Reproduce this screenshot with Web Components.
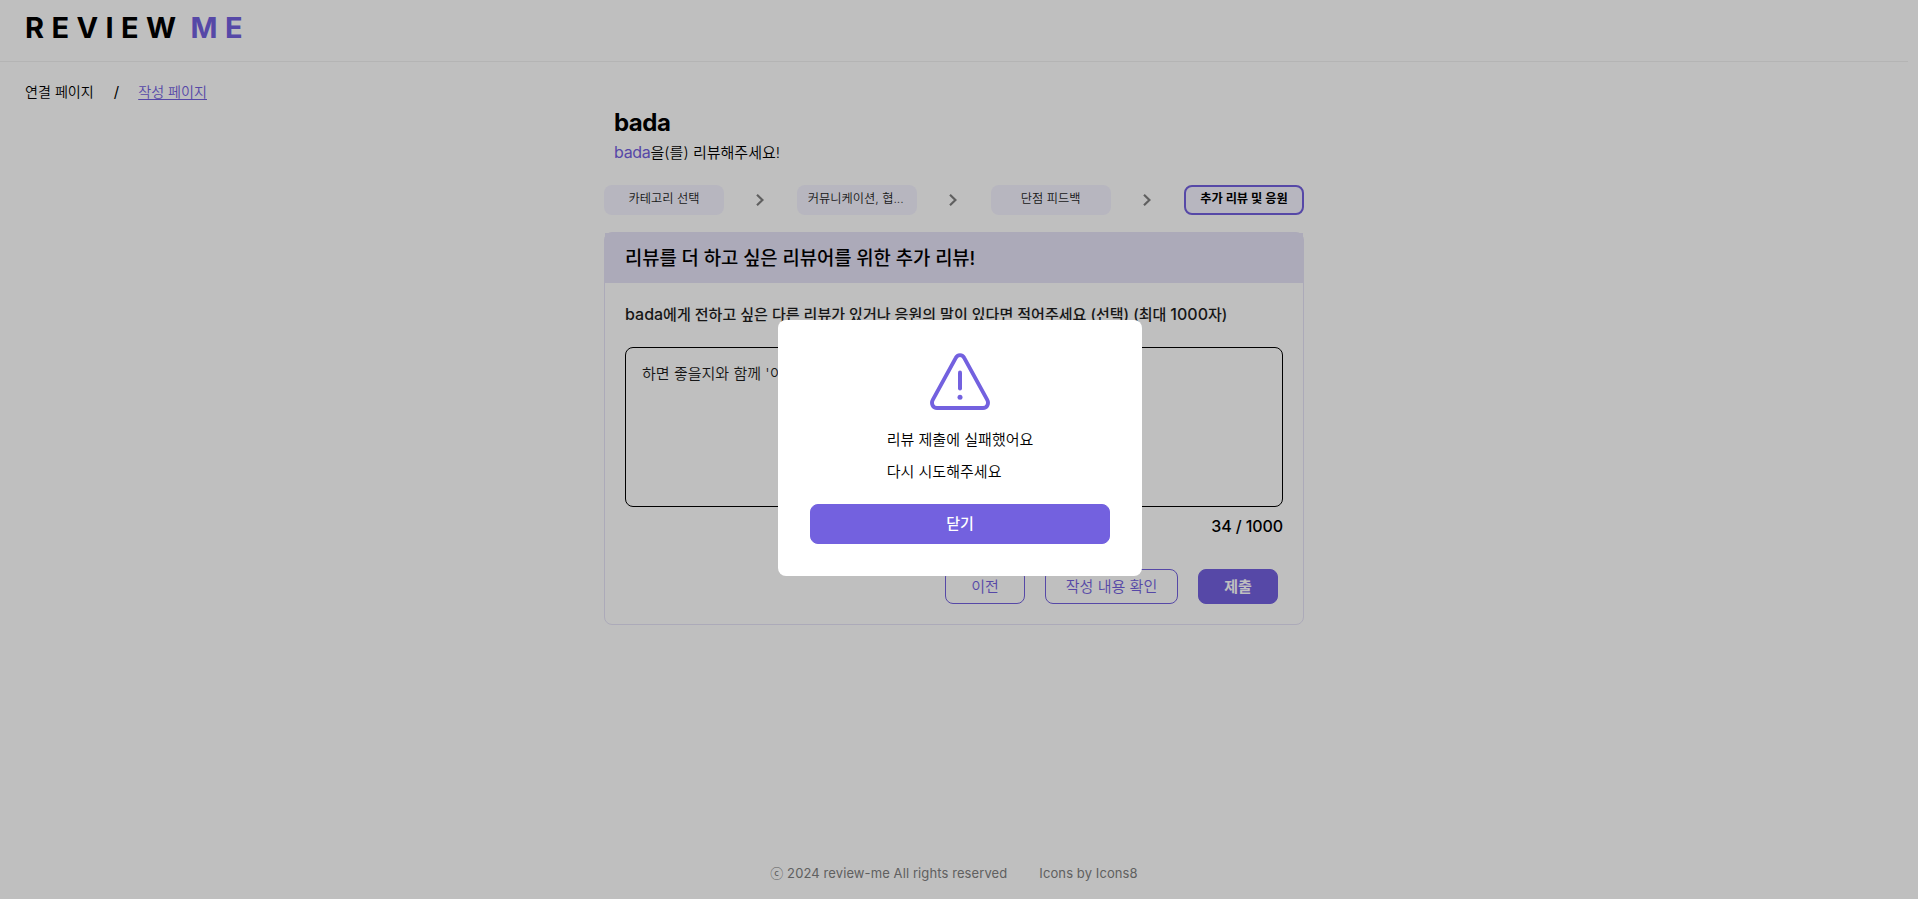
<!DOCTYPE html>
<html lang="ko">
<head>
<meta charset="utf-8">
<title>REVIEW ME</title>
<style>
html,body{margin:0;height:100%;overflow:hidden;background:#fff}
body{font-family:Inter,"Noto Sans CJK KR",sans-serif;font-size:16px;color:#000}
</style>
</head>
<body>
<review-app></review-app>
<script>
const define = (name, css, html) => customElements.define(name, class extends HTMLElement {
  constructor() {
    super();
    const t = document.createElement('template');
    t.innerHTML = `<style>*{box-sizing:border-box}${css}</style>${html}`;
    this.attachShadow({mode: 'open'}).append(t.content.cloneNode(true));
  }
});

/* Hangul run, set slightly smaller than the Latin around it */
define('ko-text', ':host{font-size:.94em;font-weight:var(--ko-weight,350)}', '<slot></slot>');

define('top-bar', `
:host{display:block;height:62px;border-bottom:1px solid #f0f0f0;padding-left:25px;box-sizing:border-box}
div{display:flex;gap:7px;font:700 29px/56px Inter,sans-serif;letter-spacing:7.4px;white-space:nowrap}
b{color:#7361df;font-weight:700}`,
`<div><span>REVIEW</span><b>ME</b></div>`);

define('bread-crumb', `
:host{display:flex;gap:20px;padding:18px 0 0 25px;font-size:15px;line-height:24px;height:43px;box-sizing:border-box}
a{color:#7361df;text-decoration:underline;text-underline-offset:2px;text-decoration-thickness:1px;margin-left:-1px;line-height:23px}
ko-text{line-height:24px}`,
`<ko-text>연결 페이지</ko-text><span>/</span><a><ko-text>작성 페이지</ko-text></a>`);

define('review-title', `
:host{display:block;padding-left:10px;height:80px}
h1{margin:0;font-size:24px;line-height:36px;font-weight:700;letter-spacing:-.5px}
p{margin:0;line-height:23px}
b{font-weight:400;color:#7361df;letter-spacing:-.3px}`,
`<h1>bada</h1><p><b>bada</b><ko-text>을(를) 리뷰해주세요!</ko-text></p>`);

define('step-item', `
:host{display:block;width:120px;height:30px;border-radius:8px;background:#f5f3ff;font-size:13px;line-height:27px;text-align:center;box-sizing:border-box;color:#1e1e1e}
:host([clipped]){padding-right:3px}
:host([current]){border:2px solid #7361df;line-height:23px;--ko-weight:700;color:#000}`,
`<ko-text><slot></slot></ko-text>`);

define('step-arrow', `:host{display:flex;width:8px;height:30px;align-items:center}svg{display:block;margin-left:-.5px}`,
`<svg width="8" height="12" viewBox="0 0 8 12" fill="none" stroke="#808080" stroke-width="2.2"><path d="M1 .8 6.4 6 1 11.2"/></svg>`);

define('step-bar', `:host{display:flex;justify-content:space-between}`,
`<step-item>카테고리 선택</step-item><step-arrow></step-arrow><step-item clipped>커뮤니케이션, 협...</step-item><step-arrow></step-arrow><step-item>단점 피드백</step-item><step-arrow></step-arrow><step-item current>추가 리뷰 및 응원</step-item>`);

define('ui-button', `
:host{display:flex;justify-content:center;width:80px;height:35px;border:1px solid #7361df;border-radius:8px;color:#7361df;line-height:33px;box-sizing:border-box}
:host([wide]){width:133px}
:host([primary]){background:#7361df;color:#fff;--ko-weight:700}
:host([full]){width:300px;height:40px;line-height:38px;--ko-weight:500}`,
`<ko-text><slot></slot></ko-text>`);

define('review-card', `
:host{display:block;margin-top:17px;height:393px;border:1px solid #e6e3f7;border-radius:8px;box-sizing:border-box}
header{height:50px;background:#e6e3f7;padding-left:20px;font-size:20px;line-height:51px;--ko-weight:500;letter-spacing:-.06px}
section{padding:18px 20px 0;display:flex;flex-direction:column}
.q{height:26px;line-height:26px;font-weight:500;--ko-weight:500;color:#1e1e1e;white-space:nowrap}
.area{margin-top:20px;height:160px;border:1px solid #000;border-radius:8px;padding:12px 16px;line-height:26px;color:#1e1e1e;white-space:nowrap;overflow:hidden}
.count{margin-top:7px;text-align:right;line-height:24px;font-weight:500;letter-spacing:-.1px}
nav{display:flex;justify-content:flex-end;gap:20px;padding-right:5px;margin-top:31px}`,
`<header><ko-text>리뷰를 더 하고 싶은 리뷰어를 위한 추가 리뷰!</ko-text></header>
<section><div class="q">bada<ko-text>에게 전하고 싶은 다른 리뷰가 있거나 응원의 말이 있다면 적어주세요 (선택) (최대 </ko-text>1000<ko-text>자)</ko-text></div>
<div class="area"><ko-text>하면 좋을지와 함께 '이</ko-text></div>
<div class="count">34 / 1000</div>
<nav><ui-button>이전</ui-button><ui-button wide>작성 내용 확인</ui-button><ui-button primary>제출</ui-button></nav></section>`);

define('page-footer', `
:host{display:flex;gap:32px;justify-content:center;font-size:13px;line-height:24px;color:#808080;white-space:nowrap;letter-spacing:.1px}`,
`<span>ⓒ 2024 review-me All rights reserved</span><span>Icons by Icons8</span>`);

define('error-modal', `
:host{position:absolute;inset:0;background:rgba(0,0,0,.25);display:flex;align-items:center;justify-content:center;padding:0 0 3px 2px;box-sizing:border-box}
.box{width:364px;height:256px;border-radius:8px;background:#fff;display:flex;flex-direction:column;align-items:center;padding:32px}
svg{display:block;margin-bottom:12px}
p{margin:0;line-height:32px;height:80px}
p ko-text{display:block}
`,
`<div class="box"><svg width="60" height="60" viewBox="0 0 60 60" fill="none" stroke="#7361df" stroke-linecap="round" stroke-linejoin="round"><path d="M25.8 5.900 2.900 47.600C.7 51.500 3 56 7 56H53C57 56 59.300 51.500 57.100 47.600L34.200 5.900C32.500 2.200 27.500 2.200 25.800 5.900Z" stroke-width="3.9"/><path d="M30 20.500V36.500" stroke-width="4"/><circle cx="30" cy="45.200" r="2.500" fill="#7361df" stroke="none"/></svg>
<p><ko-text>리뷰 제출에 실패했어요</ko-text><ko-text>다시 시도해주세요</ko-text></p>
<ui-button primary full>닫기</ui-button></div>`);

define('review-app', `
:host{display:block;position:relative;width:100%;height:899px;overflow:hidden}
.page{width:1908px;height:899px;display:flex;flex-direction:column}
main{width:700px;margin:0 auto;flex:1}
page-footer{margin-bottom:14px}`,
`<div class="page"><top-bar></top-bar><bread-crumb></bread-crumb><main><review-title></review-title><step-bar></step-bar><review-card></review-card></main><page-footer></page-footer></div><error-modal></error-modal>`);
</script>
</body>
</html>
